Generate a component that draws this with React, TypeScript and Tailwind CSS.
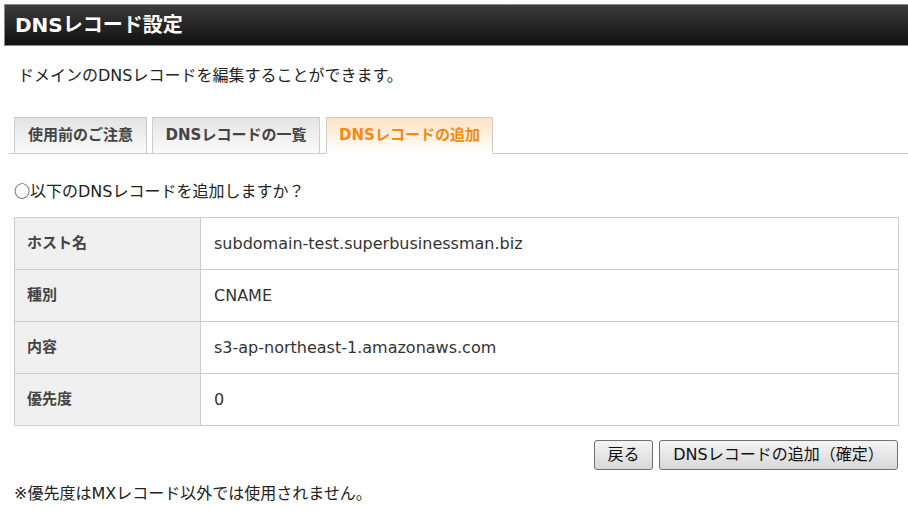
import React from "react";

export default function App() {
  const rows: [string, string][] = [
    ["ホスト名", "subdomain-test.superbusinessman.biz"],
    ["種別", "CNAME"],
    ["内容", "s3-ap-northeast-1.amazonaws.com"],
    ["優先度", "0"],
  ];
  return (
    <div className="w-[908px] h-[511px] bg-white text-[#333] overflow-hidden font-['DejaVu_Sans','Noto_Sans_CJK_JP',sans-serif]">
      <div className="pt-[4px] pl-[4px]">
        <div className="h-[42px] border border-r-0 border-[#8a8a8a] bg-gradient-to-b from-[#3c3c3c] to-[#111111] flex items-center pl-[10px]">
          <h1 className="text-white font-bold text-[20px] leading-none">DNSレコード設定</h1>
        </div>
      </div>
      <p className="mt-[18px] ml-[18px] text-[16px] leading-[24px] text-[#222]">ドメインのDNSレコードを編集することができます。</p>
      <div className="mt-[29px] ml-[8px] border-b border-[#ccc] flex items-end h-[37px]">
        <div className="ml-[6px] w-[133px] h-[37px] -mb-px border border-[#ccc] bg-gradient-to-b from-[#e4e4e4] to-[#fafafa] flex items-center justify-center text-[15px] font-bold text-[#444]">使用前のご注意</div>
        <div className="ml-[5px] w-[168px] h-[37px] -mb-px border border-[#ccc] bg-gradient-to-b from-[#e4e4e4] to-[#fafafa] flex items-center justify-center text-[15px] font-bold text-[#444]">DNSレコードの一覧</div>
        <div className="ml-[6px] w-[167px] h-[37px] -mb-px border border-[#ccc] border-b-white bg-gradient-to-b from-[#ffe2c4] to-white flex items-center justify-center text-[15px] font-bold text-[#f58a10]">DNSレコードの追加</div>
      </div>
      <p className="mt-[24px] ml-[14px] h-[24px] text-[16px] leading-[24px] text-[#222]">
        <span className="font-['Noto_Sans_CJK_JP',sans-serif]">○</span>以下のDNSレコードを追加しますか？
      </p>
      <table className="mt-[15px] ml-[14px] w-[885px] border-collapse border border-[#ccc]">
        <tbody>
          {rows.map(([k, v]) => (
            <tr key={k} className="h-[52px]">
              <th className="w-[186px] border border-[#ccc] bg-[#f0f0f0] text-left pl-[12px] text-[15px] font-bold text-[#444]">{k}</th>
              <td className="border border-[#ccc] pl-[13px] text-[16px] text-[#333]">{v}</td>
            </tr>
          ))}
        </tbody>
      </table>
      <div className="mt-[14px] mr-[10px] flex justify-end gap-[6px]">
        <button className="h-[30px] w-[59px] rounded-[3px] border border-[#707070] bg-gradient-to-b from-[#f4f4f4] to-[#d8d8d8] text-[16px] text-[#111]">戻る</button>
        <button className="h-[30px] w-[239px] rounded-[3px] border border-[#707070] bg-gradient-to-b from-[#f4f4f4] to-[#d8d8d8] text-[16px] text-[#111]">DNSレコードの追加（確定）</button>
      </div>
      <p className="mt-[12px] ml-[14px] text-[16px] leading-[24px] text-[#222]">※優先度はMXレコード以外では使用されません。</p>
    </div>
  );
}
